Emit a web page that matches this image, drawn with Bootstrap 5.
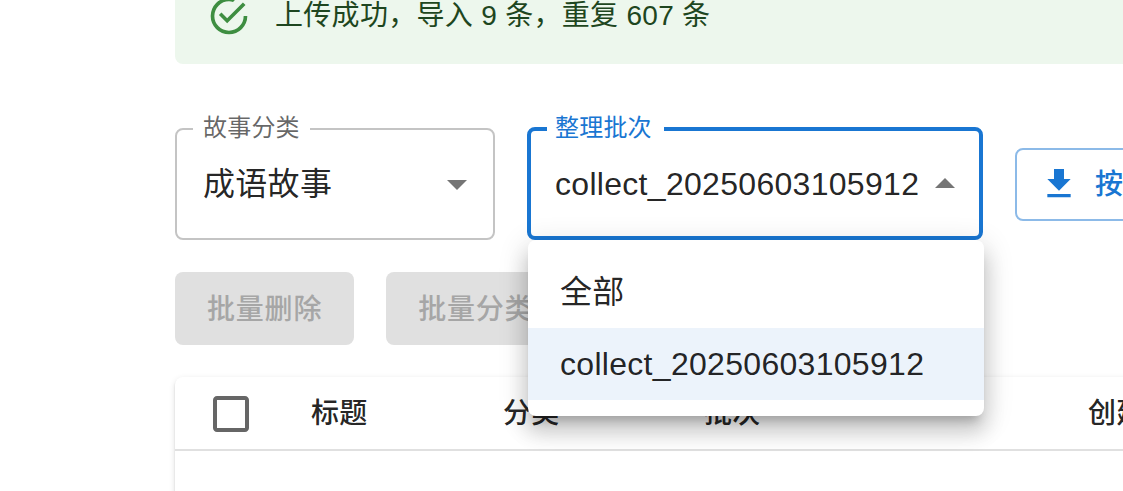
<!DOCTYPE html>
<html lang="zh-CN">
<head>
<meta charset="utf-8">
<meta name="viewport" content="width=device-width, initial-scale=1">
<title>故事管理</title>
<link href="https://cdn.jsdelivr.net/npm/bootstrap@5.3.0/dist/css/bootstrap.min.css" rel="stylesheet">
<style>
  html, body { height: 100%; overflow: hidden; }
  body { font-family: "Liberation Sans", "Noto Sans CJK SC", sans-serif; font-size: 32px; color: rgba(0,0,0,.87); background: #fff; }
  .page { margin-left: 175px; width: 1400px; }
  .notice { margin-top: -32px; height: 96px; padding: 12px 32px; gap: 24px; border: 0; border-radius: 8px; background: #edf7ed; color: #1e4620; font-size: 28px; letter-spacing: .3px; line-height: 40px; }
  .notice svg { width: 44px; height: 44px; fill: #3e8e41; }
  .filters { margin-top: 64px; height: 112px; gap: 32px; }
  .field { height: 112px; padding: 0 12px 0 26px; border: 2px solid #c4c4c4; border-radius: 8px; letter-spacing: .3px; }
  .field svg { width: 48px; height: 48px; fill: rgba(0,0,0,.54); }
  .field-category { width: 320px; }
  .field-batch { width: 456px; height: 113px; margin-top: -1px; padding: 0 10px 0 24px; border: 4px solid #1976d2; }
  .field-batch svg { margin-right: 10px; }
  .field-label { left: 16px; top: -18px; width: 117px; padding-left: 10px; font-size: 24px; line-height: 32px; letter-spacing: .2px; background: #fff; color: rgba(0,0,0,.6); }
  .field-batch .field-label { top: -19px; padding-left: 8px; color: #1976d2; }
  .options { left: -3px; top: 109px; width: 456px; padding: 16px 0; z-index: 10; border-radius: 8px; background: #fff; box-shadow: 0 10px 10px -6px rgba(0,0,0,.2), 0 16px 20px 2px rgba(0,0,0,.14), 0 6px 28px 4px rgba(0,0,0,.12); }
  .options li { height: 72px; padding: 0 32px; }
  .options .chosen { background: #ecf3fb; }
  .action { height: 73px; padding: 2px 32px 0; border: 0; border-radius: 8px; font-size: 28px; font-weight: 500; letter-spacing: .8px; }
  .action:disabled { background: #e0e0e0; color: #a6a6a6; opacity: 1; }
  .export { padding: 0 28px 0 22px; border: 2px solid #8cbae8; color: #1976d2; }
  .export svg { width: 40px; height: 40px; margin: -1px 16px 0 0; fill: #1976d2; }
  .export span { padding-top: 2px; }
  .bulk { margin-top: 32px; gap: 32px; }
  .sheet { margin-top: 32px; height: 300px; border-radius: 8px; background: #fff; box-shadow: 0 4px 2px -2px rgba(0,0,0,.2), 0 2px 2px 0 rgba(0,0,0,.14), 0 2px 6px 0 rgba(0,0,0,.12); }
  .sheet-head { height: 74px; padding-top: 2px; border-bottom: 2px solid #e0e0e0; font-size: 28px; font-weight: 500; letter-spacing: .3px; }
  .pick { width: 136px; padding-left: 32px; }
  .pick svg { width: 48px; height: 48px; fill: rgba(0,0,0,.6); }
  .col-title { width: 192px; }
  .col-type { width: 201px; }
  .col-batch { width: 384px; }
</style>
</head>
<body>
<main class="page">
  <div class="notice alert d-flex align-items-center mb-0" role="alert">
    <svg viewBox="0 0 24 24"><path d="M20,12A8,8 0 0,1 12,20A8,8 0 0,1 4,12A8,8 0 0,1 12,4C12.76,4 13.5,4.11 14.2, 4.31L15.77,2.74C14.61,2.26 13.34,2 12,2A10,10 0 0,0 2,12A10,10 0 0,0 12,22A10,10 0 0,0 22,12H20M7.91,10.08L6.5,11.5L11,16L21,6L19.59,4.58L11,13.17L7.91,10.08Z"/></svg>
    <span>上传成功，导入 9 条，重复 607 条</span>
  </div>

  <div class="filters d-flex align-items-start">
    <div class="field field-category position-relative d-flex align-items-center justify-content-between flex-shrink-0">
      <span class="field-label position-absolute">故事分类</span>
      <span>成语故事</span>
      <svg viewBox="0 0 24 24"><path d="M7 10l5 5 5-5z"/></svg>
    </div>
    <div class="field field-batch position-relative d-flex align-items-center justify-content-between flex-shrink-0">
      <span class="field-label position-absolute">整理批次</span>
      <span>collect_20250603105912</span>
      <svg class="position-absolute end-0" viewBox="0 0 24 24"><path d="M7 14l5-5 5 5z"/></svg>
      <ul class="options position-absolute list-unstyled mb-0">
        <li class="d-flex align-items-center">全部</li>
        <li class="chosen d-flex align-items-center">collect_20250603105912</li>
      </ul>
    </div>
    <button class="action export btn d-flex align-items-center align-self-center flex-shrink-0" type="button">
      <svg viewBox="0 0 24 24"><path d="M19 9h-4V3H9v6H5l7 7 7-7zM5 18v2h14v-2H5z"/></svg>
      <span>按批次导出</span>
    </button>
  </div>

  <div class="bulk d-flex">
    <button class="action btn" type="button" disabled>批量删除</button>
    <button class="action btn" type="button" disabled>批量分类</button>
  </div>

  <section class="sheet">
    <div class="sheet-head d-flex align-items-center">
      <div class="pick d-flex"><svg viewBox="0 0 24 24"><path d="M19 5v14H5V5h14m0-2H5c-1.1 0-2 .9-2 2v14c0 1.1.9 2 2 2h14c1.1 0 2-.9 2-2V5c0-1.1-.9-2-2-2z"/></svg></div>
      <div class="col-title">标题</div>
      <div class="col-type">分类</div>
      <div class="col-batch">批次</div>
      <div>创建时间</div>
    </div>
  </section>
</main>
<script src="https://cdn.jsdelivr.net/npm/bootstrap@5.3.0/dist/js/bootstrap.bundle.min.js"></script>
</body>
</html>
